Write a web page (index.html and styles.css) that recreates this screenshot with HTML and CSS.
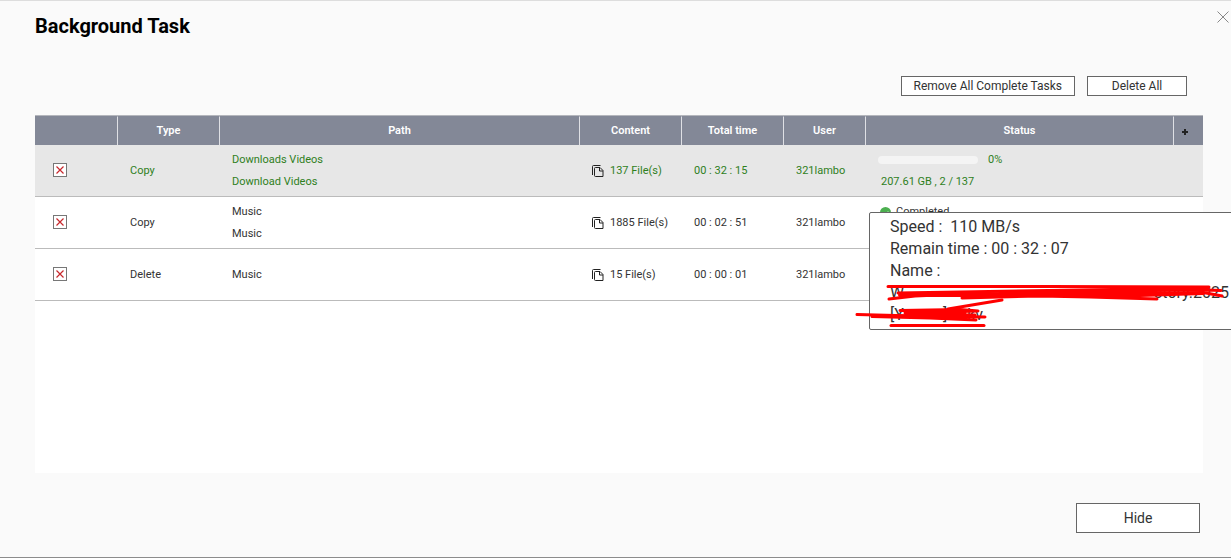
FILE: index.html
```html
<!DOCTYPE html>
<html lang="en">
<head>
    <meta charset="UTF-8">
    <meta name="viewport" content="width=device-width, initial-scale=1.0">
    <title>Background Task</title>
    <link rel="stylesheet" href="styles.css">
</head>
<body>
    <svg class="symbols" aria-hidden="true">
        <symbol id="icon-remove" viewBox="0 0 14 14">
            <rect x="0.5" y="0.5" width="13" height="13" fill="#fff" stroke="#777"/>
            <path d="M3.5 3.5l7 7M10.5 3.5l-7 7" fill="none" stroke="#c8282d" stroke-width="1.2"/>
        </symbol>
        <symbol id="icon-files" viewBox="0 0 12 12">
            <path d="M0.5 10V1.5q0-1 1-1H8.5M3.5 2.5h4.5l3 3v6h-7.5q-1 0-1-1v-7q0-1 1-1zM7.5 2.5v3.5h3.5" fill="none" stroke="#222"/>
        </symbol>
    </svg>

    <div class="dialog">
        <button class="close" aria-label="Close">
            <svg width="12" height="12" viewBox="0 0 12 12"><path d="M0.5 0.5l11 11M11.5 0.5l-11 11" stroke="#888" fill="none"/></svg>
        </button>
        <h1>Background Task</h1>

        <div class="toolbar">
            <button class="btn">Remove All Complete Tasks</button>
            <button class="btn btn-delete">Delete All</button>
        </div>

        <div class="task-list">
            <table>
                <colgroup>
                    <col class="col-action">
                    <col class="col-type">
                    <col class="col-path">
                    <col class="col-content">
                    <col class="col-time">
                    <col class="col-user">
                    <col class="col-status">
                    <col class="col-add">
                </colgroup>
                <thead>
                    <tr>
                        <th></th>
                        <th>Type</th>
                        <th>Path</th>
                        <th>Content</th>
                        <th>Total time</th>
                        <th>User</th>
                        <th>Status</th>
                        <th class="add-cell">
                            <button class="add" aria-label="Add column">
                                <svg width="6" height="6" viewBox="0 0 6 6"><path d="M3 0v6M0 3h6" stroke="#222" stroke-width="2"/></svg>
                            </button>
                        </th>
                    </tr>
                </thead>
                <tbody>
                    <tr class="active">
                        <td class="action"><button class="remove" aria-label="Remove task"><svg><use href="#icon-remove"/></svg></button></td>
                        <td>Copy</td>
                        <td>Downloads Videos<br>Download Videos</td>
                        <td><div class="files"><svg><use href="#icon-files"/></svg>137 File(s)</div></td>
                        <td>00 : 32 : 15</td>
                        <td>321lambo</td>
                        <td colspan="2">
                            <div class="progress"><span class="bar"></span>0%</div>
                            <div class="detail">207.61 GB , 2 / 137</div>
                        </td>
                    </tr>
                    <tr>
                        <td class="action"><button class="remove" aria-label="Remove task"><svg><use href="#icon-remove"/></svg></button></td>
                        <td>Copy</td>
                        <td>Music<br>Music</td>
                        <td><div class="files"><svg><use href="#icon-files"/></svg>1885 File(s)</div></td>
                        <td>00 : 02 : 51</td>
                        <td>321lambo</td>
                        <td colspan="2" class="top">
                            <div class="completed">
                                <svg width="11" height="11" viewBox="0 0 11 11"><circle cx="5.5" cy="5.5" r="5.5" fill="#4caf50"/><path d="M3 6l2 2 3-3.5" fill="none" stroke="#fff"/></svg>
                                Completed
                            </div>
                        </td>
                    </tr>
                    <tr>
                        <td class="action"><button class="remove" aria-label="Remove task"><svg><use href="#icon-remove"/></svg></button></td>
                        <td>Delete</td>
                        <td>Music</td>
                        <td><div class="files"><svg><use href="#icon-files"/></svg>15 File(s)</div></td>
                        <td>00 : 00 : 01</td>
                        <td>321lambo</td>
                        <td colspan="2"></td>
                    </tr>
                </tbody>
            </table>
        </div>

        <div class="footer">
            <button class="btn btn-hide">Hide</button>
        </div>

        <div class="tooltip">
            <div>Speed :&nbsp; 110 MB/s</div>
            <div>Remain time : 00 : 32 : 07</div>
            <div>Name :</div>
            <div class="name"><span>W</span><span class="push">story.2025</span></div>
            <div class="name name-end"><span>[Y</span><span class="push">]</span><span>kv</span></div>
            <!-- marker strokes over the file name -->
            <svg class="marker" width="381" height="140" viewBox="850 200 381 140" fill="none" stroke="#f00" stroke-width="3" stroke-linecap="round" stroke-linejoin="round">
                <path d="M888 286.5L1050 286.5L1209 287"/>
                <path d="M898 293L960 292L1080 290L1208 288"/>
                <path d="M1000 292L1100 291L1206 290L1221 290.5"/>
                <path d="M889 299L915 296L960 294L1100 293L1206 293L1222 296"/>
                <path d="M900 295L960 295L1040 295L1140 295L1203 293" stroke-width="4"/>
                <path d="M962 298L1040 296L1090 297L1157 299"/>
                <path d="M857 314.5L915 316L985 317"/>
                <path d="M900 310.5L960 309.5L978 311L905 313L975 315L880 316"/>
                <path d="M872 316.5L930 318L976 320L920 317L965 313"/>
                <path d="M910 314L962 314" stroke-width="6"/>
                <path d="M948 309L1002 300"/>
                <path d="M891 325.5H984"/>
            </svg>
        </div>
    </div>
</body>
</html>
```

FILE: styles.css
```css
body {
    margin: 0;
    font-family: Roboto, "Liberation Sans", sans-serif;
    font-size: 11px;
    color: #333;
    background: #fafafa;
}

button {
    font-family: inherit;
    color: inherit;
    padding: 0;
    border: none;
    background: none;
    cursor: pointer;
}

svg {
    display: block;
}

.symbols {
    display: none;
}

.dialog {
    position: relative;
    display: flex;
    flex-direction: column;
    box-sizing: border-box;
    min-height: 100vh;
    padding: 13px 28px 24px 35px;
    border-top: 1px solid #ddd;
    border-bottom: 1px solid #8c8c8c;
    overflow: hidden;
}

.close {
    position: absolute;
    top: 10px;
    right: 2px;
}

h1 {
    margin: 0;
    font-size: 20px;
    line-height: 24px;
    font-weight: 700;
    color: #000;
}

.toolbar {
    display: flex;
    justify-content: flex-end;
    gap: 12px;
    padding: 38px 16px 19px 0;
}

.btn {
    height: 20px;
    padding: 0 12px;
    font-size: 12px;
    border: 1px solid #666;
    background: #fff;
}

.btn-delete {
    width: 100px;
}

.btn-hide {
    width: 124px;
    height: 30px;
    font-size: 14px;
}

.task-list {
    flex: 1;
    background: #fff;
}

table {
    width: 100%;
    table-layout: fixed;
    border-spacing: 0;
    border-top: 1px solid #b4b6bc;
}

.col-action {
    width: 83px;
}

.col-type,
.col-content,
.col-time {
    width: 102px;
}

.col-user {
    width: 82px;
}

.col-status {
    width: 308px;
}

.col-add {
    width: 29px;
}

th {
    height: 26px;
    padding: 0 0 2px;
    font-weight: 600;
    color: #fff;
    background: #838897;
    border-top: 1px solid #838897;
    border-right: 1px solid #dfe0e5;
}

.add-cell {
    padding: 2px 0 0 8px;
    border-right: none;
    text-align: left;
}

.add {
    display: block;
}

td {
    height: 51px;
    padding: 0 0 0 12px;
    line-height: 22px;
    border-bottom: 1px solid #bbb;
}

td.action {
    padding-left: 18px;
    padding-bottom: 2px;
    height: 49px;
}

td.top {
    vertical-align: top;
    padding-top: 4px;
    height: 47px;
}

.active {
    color: #2f7f1d;
    background: #e7e7e7;
}

.remove {
    display: block;
}

.remove svg {
    width: 14px;
    height: 14px;
}

.files {
    display: flex;
    align-items: center;
    gap: 6px;
}

.files svg {
    width: 12px;
    height: 12px;
}

.progress {
    display: flex;
    align-items: center;
    gap: 10px;
}

.bar {
    width: 100px;
    height: 8px;
    border-radius: 4px;
    background: #f4f4f4;
}

.detail {
    padding-left: 3px;
}

.completed {
    display: flex;
    align-items: center;
    gap: 5px;
    padding-left: 2px;
}

.footer {
    display: flex;
    justify-content: flex-end;
    padding: 30px 3px 0 0;
}

.tooltip {
    position: absolute;
    top: 211px;
    right: -4px;
    box-sizing: border-box;
    width: 366px;
    padding: 3px 5px 3px 20px;
    font-size: 16px;
    line-height: 22px;
    white-space: nowrap;
    background: #fff;
    border: 1px solid #666;
    border-radius: 2px;
}

.name {
    display: flex;
    gap: 20px;
}

.name-end {
    width: 93px;
}

.push {
    margin-left: auto;
}

.marker {
    position: absolute;
    top: -13px;
    left: -20px;
}
```
